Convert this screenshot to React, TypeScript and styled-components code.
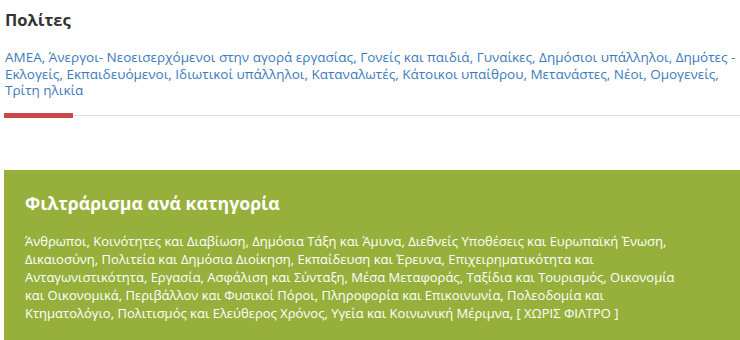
import React from 'react'
import styled, { createGlobalStyle } from 'styled-components'

const GlobalStyle = createGlobalStyle`
  html, body {
    margin: 0;
    padding: 0;
    background: #fff;
    overflow: hidden;
  }
  body {
    font-family: "Open Sans", "Noto Sans", sans-serif;
  }
`

const Page = styled.div`
  width: 760px;
  padding: 8px 0 0 4px;
`

const Section = styled.section`
  position: relative;
  border-bottom: 1px solid #dcdcdc;
  padding-bottom: 16px;
`

const Title = styled.h2`
  margin: 0 0 17px 1px;
  font-size: 16.5px;
  font-weight: 700;
  color: #333;
  line-height: 24px;
`

const LinkList = styled.div`
  font-size: 13.5px;
  line-height: 16.5px;
  color: #3b7bbd;
  max-width: 745px;
  padding-left: 1px;
`

const Link = styled.a`
  color: inherit;
  text-decoration: none;
`

const Accent = styled.span`
  position: absolute;
  left: 0;
  bottom: -3px;
  width: 69px;
  height: 5px;
  background: #c9464a;
`

const FilterBox = styled.div`
  margin-top: 54px;
  background: #97b03c;
  padding: 21px 21px 30px;
  min-height: 170px;
`

const FilterTitle = styled.h3`
  margin: 0 0 17px;
  font-size: 17.7px;
  font-weight: 700;
  color: #fff;
  line-height: 24px;
`

const FilterList = styled.div`
  font-size: 13px;
  line-height: 18px;
  color: #fff;
  width: 662px;
`

const citizens = [
  'ΑΜΕΑ',
  'Άνεργοι- Νεοεισερχόμενοι στην αγορά εργασίας',
  'Γονείς και παιδιά',
  'Γυναίκες',
  'Δημόσιοι υπάλληλοι',
  'Δημότες - Εκλογείς',
  'Εκπαιδευόμενοι',
  'Ιδιωτικοί υπάλληλοι',
  'Καταναλωτές',
  'Κάτοικοι υπαίθρου',
  'Μετανάστες',
  'Νέοι',
  'Ομογενείς',
  'Τρίτη ηλικία',
]

const categories = [
  'Άνθρωποι, Κοινότητες και Διαβίωση',
  'Δημόσια Τάξη και Άμυνα',
  'Διεθνείς Υποθέσεις και Ευρωπαϊκή Ένωση',
  'Δικαιοσύνη',
  'Πολιτεία και Δημόσια Διοίκηση',
  'Εκπαίδευση και Έρευνα',
  'Επιχειρηματικότητα και Ανταγωνιστικότητα',
  'Εργασία, Ασφάλιση και Σύνταξη',
  'Μέσα Μεταφοράς',
  'Ταξίδια και Τουρισμός',
  'Οικονομία και Οικονομικά',
  'Περιβάλλον και Φυσικοί Πόροι',
  'Πληροφορία και Επικοινωνία',
  'Πολεοδομία και Κτηματολόγιο',
  'Πολιτισμός και Ελεύθερος Χρόνος',
  'Υγεία και Κοινωνική Μέριμνα',
  '[ ΧΩΡΙΣ ΦΙΛΤΡΟ ]',
]

const joinLinks = (items: string[]) =>
  items.map((item, i) => (
    <React.Fragment key={item}>
      <Link href="#">{item}</Link>
      {i < items.length - 1 ? ', ' : ''}
    </React.Fragment>
  ))

const App = () => {
  return (
    <Page>
      <GlobalStyle />
      <Section>
        <Title>Πολίτες</Title>
        <LinkList>{joinLinks(citizens)}</LinkList>
        <Accent />
      </Section>
      <FilterBox>
        <FilterTitle>Φιλτράρισμα ανά κατηγορία</FilterTitle>
        <FilterList>{joinLinks(categories)}</FilterList>
      </FilterBox>
    </Page>
  )
}

export default App
